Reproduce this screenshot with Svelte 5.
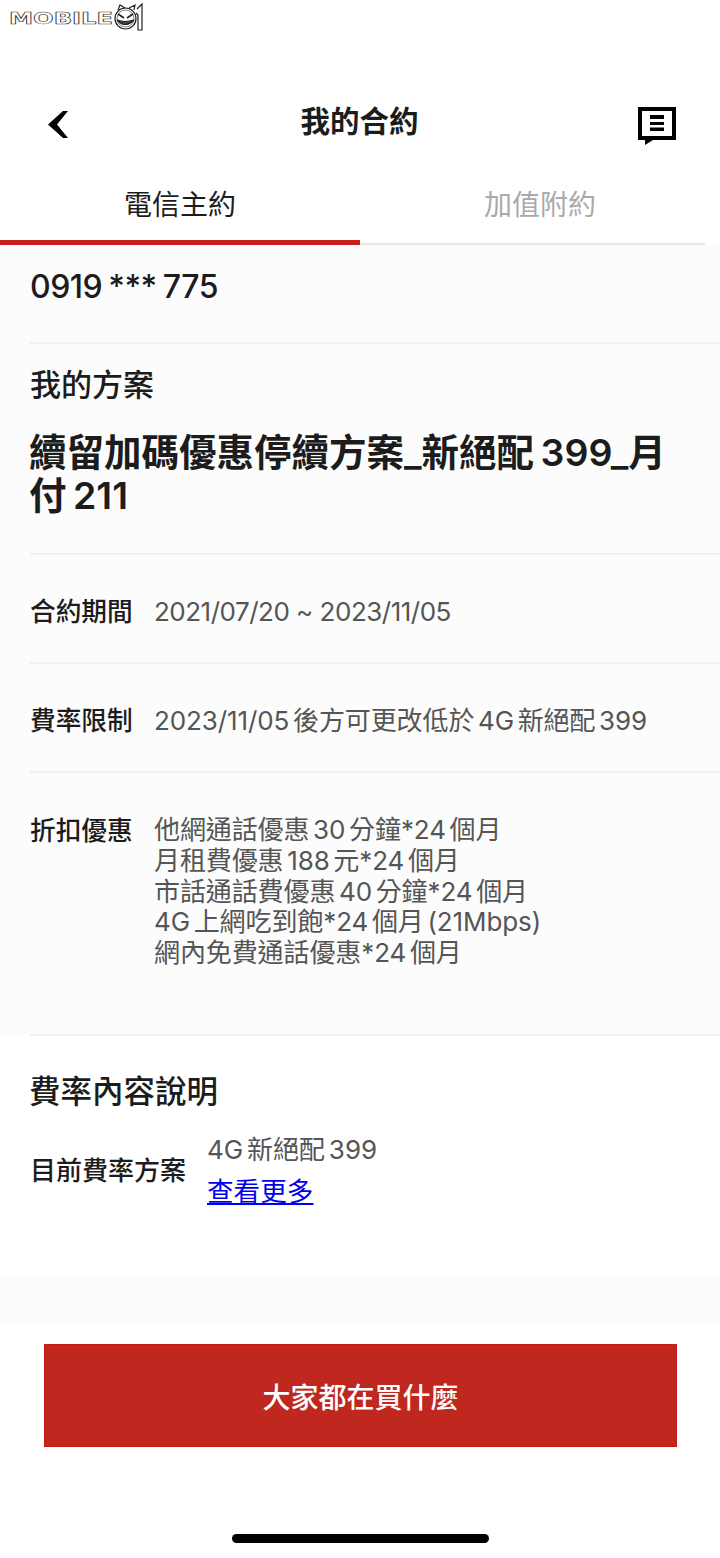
<script>
    const terms = [
        { label: '合約期間', lines: ['2021/07/20 ~ 2023/11/05'], date: true },
        { label: '費率限制', lines: ['2023/11/05 後方可更改低於 4G 新絕配 399'] },
    ]

    const discounts = [
        '他網通話優惠 30 分鐘*24 個月',
        '月租費優惠 188 元*24 個月',
        '市話通話費優惠 40 分鐘*24 個月',
        '4G 上網吃到飽*24 個月 (21Mbps)',
        '網內免費通話優惠*24 個月',
    ]
</script>

<div class="page">
    <div class="watermark">
        <svg width="150" height="32" viewBox="0 0 150 32" fill="none" stroke="#222" stroke-width="1.2">
            <text class="wordmark" x="9" y="24" textLength="104" lengthAdjust="spacingAndGlyphs">MOBILE</text>
            <circle cx="125.5" cy="18.5" r="10.5" fill="#fff" />
            <circle cx="125.5" cy="18.5" r="8.5" stroke-width="0.6" />
            <path d="M118 10 L120 5 L125 8 M129 8 L135 5 L134 10" />
            <path d="M118 14 L124 18 M133 14 L127 18" stroke-width="1.6" />
            <path d="M117 20 Q125 29 134 20 Q125 23 117 20 Z" fill="#444" />
            <path d="M137 9 L142 4 V30 H138 V15 L136 13" fill="#fff" />
        </svg>
    </div>

    <header class="topbar">
        <svg class="back" width="24" height="30" viewBox="0 0 24 30">
            <path fill="#000" d="M17 1 H22 L11 14.5 L22 28 H17 L2 14.5 Z" />
        </svg>
        <h1>我的合約</h1>
        <svg class="memo" width="38" height="39" viewBox="0 0 38 39">
            <path fill="#000" fill-rule="evenodd" d="M0 0 H38 V33 H15 L7 38 V33 H0 Z M4 4 V29 H34 V4 Z" />
            <path fill="#000" d="M12 8 H26 V12 H12 Z M12 15 H26 V18 H12 Z M12 20.5 H26 V24 H12 Z" />
        </svg>
    </header>

    <nav class="tabs">
        <div class="tab active">電信主約</div>
        <div class="tab">加值附約</div>
    </nav>

    <section class="contract">
        <div class="phone">0919 *** 775</div>
        <div class="plan">
            <h2>我的方案</h2>
            <p class="plan-name">續留加碼優惠停續方案_新絕配 399_月付 211</p>
        </div>
        {#each terms as term}
            <div class="term">
                <span class="term-label">{term.label}</span>
                <div class="term-value" class:date={term.date}>
                    {#each term.lines as line}
                        <div>{line}</div>
                    {/each}
                </div>
            </div>
        {/each}
        <div class="term discounts">
            <span class="term-label">折扣優惠</span>
            <div class="term-value">
                {#each discounts as line}
                    <div>{line}</div>
                {/each}
            </div>
        </div>
    </section>

    <section class="rates">
        <h2>費率內容說明</h2>
        <div class="rate-row">
            <span class="rate-label">目前費率方案</span>
            <div class="rate-value">
                <div>4G 新絕配 399</div>
                <a href="#more">查看更多</a>
            </div>
        </div>
    </section>

    <div class="band"></div>

    <div class="action">
        <button type="button">大家都在買什麼</button>
    </div>

    <div class="home"><span></span></div>
</div>

<style>
    :global(body) {
        margin: 0;
        background: #fff;
    }

    .page {
        width: 720px;
        height: 1558px;
        overflow: hidden;
        font-family: Inter, "Noto Sans CJK TC", sans-serif;
        color: #1c1c1c;
        background: #fff;
    }

    .watermark {
        height: 32px;
    }

    .watermark svg {
        display: block;
    }

    .wordmark {
        font-family: "DejaVu Sans", sans-serif;
        font-weight: 700;
        font-size: 15px;
        fill: #fff;
        stroke: #333;
        stroke-width: 0.6px;
    }

    .topbar {
        height: 140px;
        box-sizing: border-box;
        padding: 58px 44px 0 46px;
        display: flex;
        justify-content: space-between;
        align-items: flex-start;
    }

    .back {
        margin-top: 20px;
    }

    .memo {
        margin-top: 17px;
    }

    .topbar h1 {
        margin: 9px 0 0 11px;
        font-size: 29.5px;
        line-height: 44px;
        font-weight: 600;
    }

    .tabs {
        display: flex;
        align-items: flex-start;
        width: 705px;
        height: 71px;
        border-bottom: 2px solid #e6e6e6;
    }

    .tab {
        width: 360px;
        flex: none;
        box-sizing: border-box;
        padding-top: 13px;
        text-align: center;
        font-size: 28px;
        line-height: 40px;
        color: #aaa;
    }

    .tab.active {
        color: #1c1c1c;
        height: 73px;
        border-bottom: 5px solid #c9201b;
    }

    .contract {
        background: #fcfcfc;
        height: 789px;
    }

    .phone {
        height: 99px;
        margin-left: 30px;
        box-sizing: border-box;
        padding-top: 21px;
        font-size: 32px;
        line-height: 42px;
        font-weight: 500;
        letter-spacing: -0.5px;
        word-spacing: -2px;
        border-bottom: 2px solid #f0f0f0;
    }

    .plan {
        height: 211px;
        margin-left: 30px;
        box-sizing: border-box;
        padding-top: 19px;
        border-bottom: 2px solid #f0f0f0;
    }

    .plan h2 {
        margin: 0;
        font-size: 31px;
        line-height: 44px;
        font-weight: 500;
    }

    .plan-name {
        margin: 24px 0 0 -1px;
        width: 650px;
        font-size: 37.5px;
        line-height: 43px;
        font-weight: 600;
        word-spacing: -3px;
    }

    .term {
        margin-left: 30px;
        height: 109px;
        box-sizing: border-box;
        padding-top: 39px;
        display: flex;
        border-bottom: 2px solid #f0f0f0;
    }

    .discounts {
        height: 261px;
        padding-top: 40px;
        border-bottom: 0;
    }

    .term-label {
        width: 124px;
        flex: none;
        font-size: 25.7px;
        line-height: 36px;
        font-weight: 500;
    }

    .term-value {
        font-size: 26px;
        line-height: 36px;
        letter-spacing: -0.1px;
        word-spacing: -3.5px;
        color: #555;
    }

    .term-value.date {
        letter-spacing: -0.5px;
        word-spacing: 0;
    }

    .discounts .term-value {
        line-height: 30.75px;
        margin-top: 2px;
    }

    .rates {
        height: 240px;
        margin-left: 30px;
        box-sizing: border-box;
        padding-top: 34px;
        border-top: 2px solid #f0f0f0;
    }

    .rates h2 {
        margin: 0 0 0 -1px;
        font-size: 31.5px;
        line-height: 44px;
        font-weight: 500;
    }

    .rate-row {
        margin-top: 15px;
        display: flex;
        align-items: center;
    }

    .rate-label {
        width: 177px;
        flex: none;
        font-size: 26px;
        line-height: 36px;
        font-weight: 500;
    }

    .rate-value {
        font-size: 26px;
        line-height: 42px;
        word-spacing: -3.5px;
        color: #555;
    }

    .rate-value a {
        display: block;
        color: #0000ee;
        text-decoration: underline;
        font-size: 26.6px;
        line-height: 41px;
    }

    .band {
        height: 51px;
        background: #fcfcfc;
    }

    .action {
        padding: 19px 43px 0 44px;
    }

    .action button {
        display: block;
        width: 100%;
        height: 103px;
        background: #c0271f;
        border: 1px solid #c41a12;
        color: #fff;
        font-family: inherit;
        font-size: 28px;
        font-weight: 500;
    }

    .home {
        margin-top: 87px;
        display: flex;
        justify-content: center;
    }

    .home span {
        display: block;
        width: 257px;
        height: 9px;
        border-radius: 5px;
        background: #000;
    }
</style>
